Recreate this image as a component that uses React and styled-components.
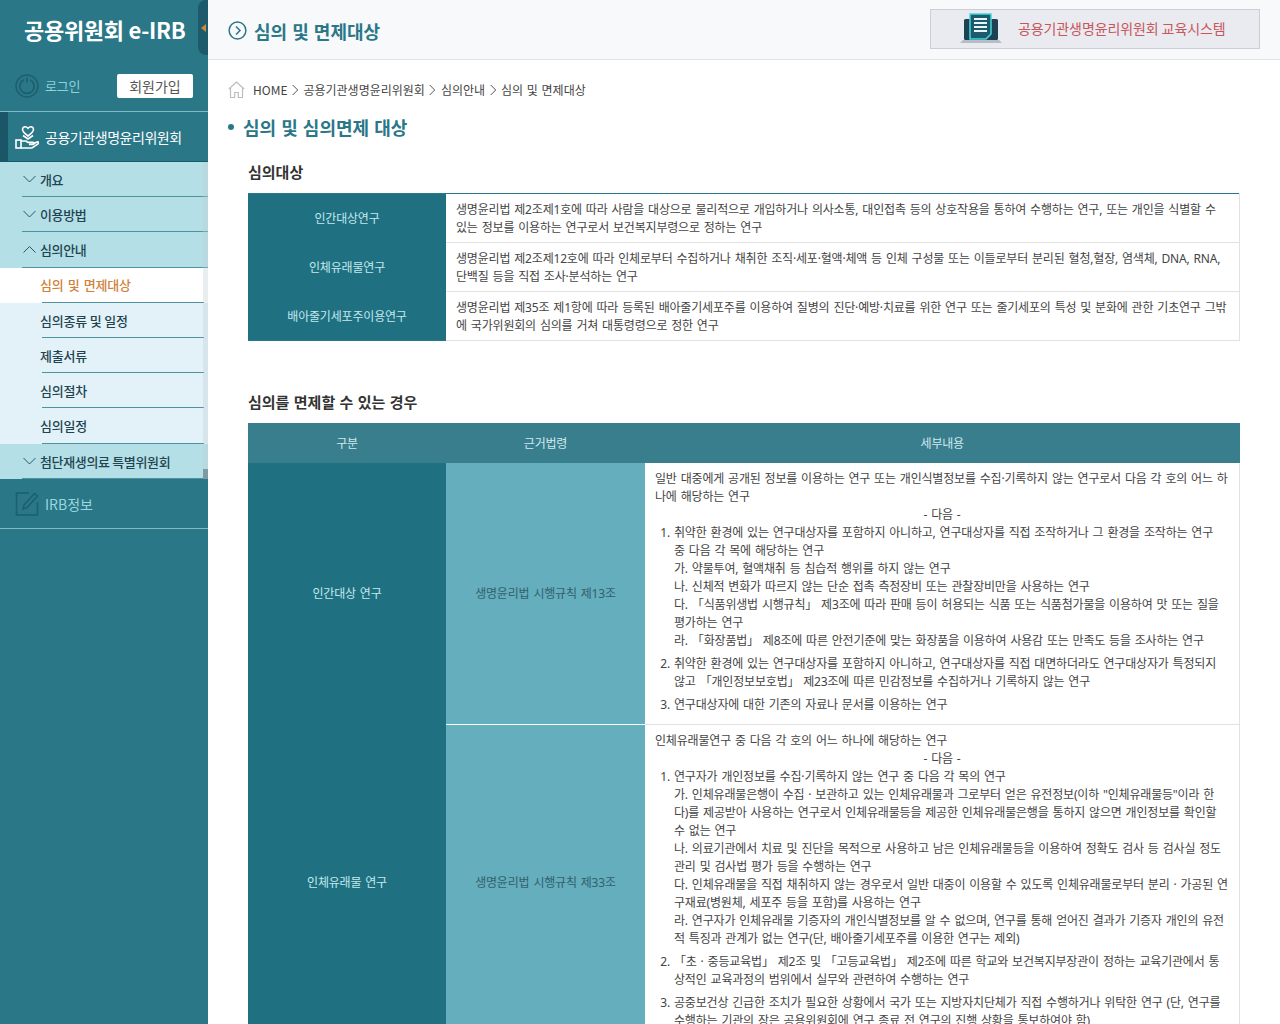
import React from 'react';
import styled, { createGlobalStyle } from 'styled-components';

const GlobalStyle = createGlobalStyle`
  html, body {
    margin: 0;
    padding: 0;
    height: 1024px;
    overflow: hidden;
    background: #ffffff;
    font-family: 'Noto Sans CJK KR', 'Noto Sans', sans-serif;
  }
  * { box-sizing: border-box; }
`;

const Page = styled.div`
  display: flex;
  width: 1280px;
  height: 1024px;
  overflow: hidden;
`;

const Sidebar = styled.aside`
  position: relative;
  flex: 0 0 208px;
  background: #2a7788;
`;

const Logo = styled.div`
  height: 60px;
  padding: 11px 0 0 24px;
  color: #ffffff;
  font-size: 22px;
  line-height: 36px;
  font-weight: 700;
  letter-spacing: -0.3px;
`;

const CollapseTab = styled.div`
  position: absolute;
  top: 0;
  right: 0;
  width: 10px;
  height: 55px;
  background: #1d5a6b;
  border-radius: 8px 0 0 8px;
  display: flex;
  align-items: center;
  justify-content: center;
  &::after {
    content: '';
    border-right: 5px solid #c98a3c;
    border-top: 4px solid transparent;
    border-bottom: 4px solid transparent;
  }
`;

const LoginRow = styled.div`
  height: 52px;
  display: flex;
  align-items: center;
  padding: 0 15px;
  border-bottom: 1px solid #7fbcc8;
`;

const LoginText = styled.span`
  margin-left: 6px;
  color: #8fd0da;
  font-size: 13px;
  letter-spacing: -0.2px;
`;

const JoinButton = styled.span`
  margin-left: auto;
  width: 76px;
  height: 24px;
  background: #ffffff;
  border-radius: 2px;
  color: #555555;
  font-size: 14px;
  line-height: 24px;
  text-align: center;
`;

const ActiveMenu = styled.div`
  height: 50px;
  display: flex;
  align-items: center;
  border-left: 8px solid #1b5668;
  padding-left: 7px;
  border-bottom: 1px solid #155c6b;
  color: #ffffff;
  font-size: 14px;
  letter-spacing: -0.45px;
`;

const MenuIconLabel = styled.span`
  margin-left: 6px;
`;

const SubMenu = styled.div`
  position: relative;
  height: 317px;
  background: #b4dfe6;
  &::after {
    content: '';
    position: absolute;
    z-index: 2;
    top: 0;
    right: 0;
    width: 5px;
    height: 100%;
    background: linear-gradient(to bottom, rgba(190, 205, 210, 0.35) 97%, #7f9aa2 97%);
  }
`;

const Depth2 = styled.div`
  position: relative;
  height: 35.2px;
  padding-left: 40px;
  display: flex;
  align-items: center;
  color: #1f4450;
  font-size: 13px;
  font-weight: 500;
  letter-spacing: -0.35px;
  &::before {
    content: '';
    position: absolute;
    left: 22px;
    right: 0;
    bottom: 0;
    height: 1px;
    background: #4d93a0;
  }
`;

const Chevron = styled.svg`
  position: absolute;
  left: 23px;
  top: 13px;
`;

const Depth3 = styled.div`
  position: relative;
  z-index: 1;
  height: 35.2px;
  padding: 0 0 ${(p) => (p.$active ? 1 : 0)}px 40px;
  display: flex;
  align-items: center;
  background: ${(p) => (p.$active ? '#ffffff' : '#e3f2f8')};
  color: ${(p) => (p.$active ? '#d0823c' : '#1f4450')};
  font-size: 13px;
  font-weight: 500;
  letter-spacing: -0.2px;
  word-spacing: ${(p) => (p.$active ? 1.5 : 0)}px;
  &::before {
    content: '';
    position: absolute;
    left: 42px;
    right: 4px;
    bottom: 0;
    height: 1px;
    background: #4d93a0;
  }
`;

const InfoMenu = styled.div`
  height: 50px;
  display: flex;
  align-items: center;
  padding-left: 15px;
  border-bottom: 1px solid #7fbcc8;
  color: #9ad6df;
  font-size: 14px;
`;

const Main = styled.main`
  flex: 1;
  min-width: 0;
`;

const TopBar = styled.header`
  height: 60px;
  background: #f8f9fb;
  border-bottom: 1px solid #e2e2e2;
  display: flex;
  align-items: center;
  padding: 2px 20px 0 20px;
`;

const TopTitle = styled.h1`
  margin: 0 0 0 7px;
  color: #2a7788;
  font-size: 18px;
  line-height: 28px;
  font-weight: 700;
  word-spacing: 1px;
`;

const EduBanner = styled.div`
  margin-left: auto;
  width: 330px;
  height: 40px;
  margin-top: -4px;
  background: #e9ebf1;
  border: 1px solid #ccced3;
  display: flex;
  align-items: center;
  padding-left: 29px;
  color: #c8565a;
  font-size: 14px;
  letter-spacing: -0.1px;
`;

const BannerText = styled.span`
  margin-left: 16px;
  padding-bottom: 2px;
`;

const Content = styled.div`
  padding: 0 40px 0 20px;
`;

const Breadcrumb = styled.nav`
  height: 54px;
  padding-top: 4px;
  display: flex;
  align-items: center;
  color: #444444;
  font-size: 12px;
  word-spacing: 1px;
`;

const Crumb = styled.span`
  margin-left: ${(p) => (p.$home ? 8 : 0)}px;
`;

const CrumbSep = styled.svg`
  margin: 2px 4.500px 0 4.500px;
`;

const PageHeading = styled.h2`
  position: relative;
  margin: 0 0 0 15px;
  height: 32px;
  color: #2a7788;
  font-size: 18px;
  line-height: 26px;
  font-weight: 700;
  word-spacing: 1px;
  &::before {
    content: '';
    position: absolute;
    left: -15px;
    top: 10px;
    width: 6px;
    height: 6px;
    border-radius: 50%;
    background: #2a7788;
  }
`;

const Section = styled.section`
  margin-left: 20px;
`;

const SectionTitle = styled.h3`
  margin: 0;
  color: #333333;
  font-size: 15px;
  line-height: 24px;
  font-weight: 700;
  word-spacing: 1px;
  padding-top: ${(p) => p.$top}px;
  padding-bottom: ${(p) => p.$bottom}px;
`;

const Table = styled.table`
  width: 992px;
  table-layout: fixed;
  border-collapse: collapse;
  color: #444444;
  font-family: 'Noto Sans', 'Noto Sans CJK KR', sans-serif;
  font-size: 12px;
  line-height: 18px;
  letter-spacing: -0.18px;
  word-spacing: 1px;
  border-top: ${(p) => (p.$lined ? '1px solid #2a7788' : 'none')};
  border-bottom: ${(p) => (p.$lined ? '1px solid #2a7788' : 'none')};
`;

const HeadCell = styled.th`
  height: 40px;
  padding: 2px 0 0;
  background: #397e8d;
  color: #cfe9ee;
  font-weight: 400;
  text-align: center;
`;

const DarkCell = styled.td`
  padding: ${(p) => (p.$nudge ? '2px 0 0' : 0)};
  background: #1f7182;
  color: #c4e8ee;
  text-align: center;
`;

const LightCell = styled.td`
  padding: 0;
  background: #64aebd;
  color: #33606c;
  text-align: center;
  border-bottom: 1px solid #ffffff;
`;

const TextCell = styled.td`
  height: 49px;
  padding: ${(p) => p.$pad || '7px 10px 5px'};
  vertical-align: top;
  border-bottom: 1px solid #e2e2e2;
  border-right: 1px solid #e2e2e2;
`;

const Centered = styled.div`
  text-align: center;
`;

const NumberList = styled.ol`
  margin: 0;
  padding: 0 0 0 19px;
`;

const NumberItem = styled.li`
  margin-bottom: 5px;
  &:last-child { margin-bottom: 0; }
`;

const PowerIcon = () => (
  <svg width="24" height="24" viewBox="0 0 24 24" fill="none" stroke="#1d5f70" strokeWidth="1.5">
    <circle cx="12" cy="12" r="11" />
    <path d="M8.800 5.800a7.200 7.200 0 1 0 6.400 0" strokeWidth="1.800" />
    <path d="M12 3.500v5" strokeWidth="1.800" />
  </svg>
);

const CareIcon = () => (
  <svg width="24" height="26" viewBox="0 0 24 26" fill="none" stroke="#ffffff" strokeWidth="1.6">
    <path d="M13 12C9 9 7.500 7.500 7.500 5.200 7.500 3 10.500 1.500 13 4.200 15.500 1.500 18.500 3 18.500 5.200 18.500 7.500 17 9 13 12Z" />
    <rect x="1" y="16" width="5" height="8" />
    <path d="M6 17h5l2 1.400h5c1.500 0 1.500 2 0 2h-4M18 20l4-2c1.400-.6 2 1 1 1.800L17 24H6" />
    <path d="M8 11.500l5 3.500 5-3.500" />
  </svg>
);

const EditIcon = () => (
  <svg width="24" height="26" viewBox="0 0 24 26" fill="none" stroke="#1d5f70" strokeWidth="1.6">
    <path d="M14 2H1.500v22h21V11" />
    <path d="M8 18l1-4L19.500 2.500l3 2.500L12 16.500 8 18Z" />
  </svg>
);

const LaptopDocIcon = () => (
  <svg width="42" height="32" viewBox="0 0 42 32">
    <path d="M3 27h36l3 3H0Z" fill="#b8bcc4" />
    <rect x="4" y="6" width="34" height="21" rx="1.500" fill="#1d4254" />
    <path d="M10 1h21v20l-5 5H10Z" fill="#1d5a6b" stroke="#46d6dc" strokeWidth="1.500" />
    <path d="M14 6h13M14 10h13M14 14h13M14 18h13" stroke="#e5f7f9" strokeWidth="1.800" />
  </svg>
);

const HomeIcon = () => (
  <svg width="17" height="17" viewBox="0 0 17 17" fill="none" stroke="#bdbdbd" strokeWidth="1.200">
    <path d="M.8 8 8.500 1l7.700 7M2.500 7v9.500h4.200v-5h3.600v5h4.200V7" />
  </svg>
);

const CircleArrow = () => (
  <svg width="19" height="19" viewBox="0 0 19 19" fill="none" stroke="#2a7788" strokeWidth="1.500">
    <circle cx="9.500" cy="9.500" r="8.400" />
    <path d="M8 5.500l4 4-4 4" />
  </svg>
);

const Arrow = ({ up }) => (
  <Chevron width="13" height="8" viewBox="0 0 13 8" fill="none" stroke="#1f5a68" strokeWidth="1">
    <path d={up ? 'M.5 7.500l6-6 6 6' : 'M.5 1l6 6 6-6'} />
  </Chevron>
);

const Sep = () => (
  <CrumbSep width="7" height="12" viewBox="0 0 7 12" fill="none" stroke="#555555" strokeWidth="1">
    <path d="M.7 1l5 5-5 5" />
  </CrumbSep>
);

const App = () => (
  <Page>
    <GlobalStyle />
    <Sidebar>
      <CollapseTab />
      <Logo>공용위원회 e-IRB</Logo>
      <LoginRow>
        <PowerIcon />
        <LoginText>로그인</LoginText>
        <JoinButton>회원가입</JoinButton>
      </LoginRow>
      <ActiveMenu>
        <CareIcon />
        <MenuIconLabel>공용기관생명윤리위원회</MenuIconLabel>
      </ActiveMenu>
      <SubMenu>
        <Depth2><Arrow />개요</Depth2>
        <Depth2><Arrow />이용방법</Depth2>
        <Depth2><Arrow up />심의안내</Depth2>
        <Depth3 $active>심의 및 면제대상</Depth3>
        <Depth3>심의종류 및 일정</Depth3>
        <Depth3>제출서류</Depth3>
        <Depth3>심의절차</Depth3>
        <Depth3>심의일정</Depth3>
        <Depth2><Arrow />첨단재생의료 특별위원회</Depth2>
      </SubMenu>
      <InfoMenu>
        <EditIcon />
        <MenuIconLabel>IRB정보</MenuIconLabel>
      </InfoMenu>
    </Sidebar>
    <Main>
      <TopBar>
        <CircleArrow />
        <TopTitle>심의 및 면제대상</TopTitle>
        <EduBanner>
          <LaptopDocIcon />
          <BannerText>공용기관생명윤리위원회 교육시스템</BannerText>
        </EduBanner>
      </TopBar>
      <Content>
        <Breadcrumb>
          <HomeIcon />
          <Crumb $home>HOME</Crumb>
          <Sep />
          <Crumb>공용기관생명윤리위원회</Crumb>
          <Sep />
          <Crumb>심의안내</Crumb>
          <Sep />
          <Crumb>심의 및 면제대상</Crumb>
        </Breadcrumb>
        <PageHeading>심의 및 심의면제 대상</PageHeading>
        <Section>
          <SectionTitle $top={14} $bottom={9}>심의대상</SectionTitle>
          <Table $lined>
            <colgroup>
              <col width="198" />
              <col />
            </colgroup>
            <tbody>
              <tr>
                <DarkCell $nudge>인간대상연구</DarkCell>
                <TextCell>생명윤리법 제2조제1호에 따라 사람을 대상으로 물리적으로 개입하거나 의사소통, 대인접촉 등의 상호작용을 통하여 수행하는 연구, 또는 개인을 식별할 수 있는 정보를 이용하는 연구로서 보건복지부령으로 정하는 연구</TextCell>
              </tr>
              <tr>
                <DarkCell $nudge>인체유래물연구</DarkCell>
                <TextCell>생명윤리법 제2조제12호에 따라 인체로부터 수집하거나 채취한 조직·세포·혈액·체액 등 인체 구성물 또는 이들로부터 분리된 혈청,혈장, 염색체, DNA, RNA, 단백질 등을 직접 조사·분석하는 연구</TextCell>
              </tr>
              <tr>
                <DarkCell $nudge>배아줄기세포주이용연구</DarkCell>
                <TextCell>생명윤리법 제35조 제1항에 따라 등록된 배아줄기세포주를 이용하여 질병의 진단·예방·치료를 위한 연구 또는 줄기세포의 특성 및 분화에 관한 기초연구 그밖에 국가위원회의 심의를 거쳐 대통령령으로 정한 연구</TextCell>
              </tr>
            </tbody>
          </Table>
          <SectionTitle $top={49} $bottom={9}>심의를 면제할 수 있는 경우</SectionTitle>
          <Table>
            <colgroup>
              <col width="198" />
              <col width="199" />
              <col />
            </colgroup>
            <thead>
              <tr>
                <HeadCell>구분</HeadCell>
                <HeadCell>근거법령</HeadCell>
                <HeadCell>세부내용</HeadCell>
              </tr>
            </thead>
            <tbody>
              <tr>
                <DarkCell>인간대상 연구</DarkCell>
                <LightCell>생명윤리법 시행규칙 제13조</LightCell>
                <TextCell $pad="7px 10px 10px 10px">
                  일반 대중에게 공개된 정보를 이용하는 연구 또는 개인식별정보를 수집·기록하지 않는 연구로서 다음 각 호의 어느 하나에 해당하는 연구
                  <Centered>- 다음 -</Centered>
                  <NumberList>
                    <NumberItem>
                      취약한 환경에 있는 연구대상자를 포함하지 아니하고, 연구대상자를 직접 조작하거나 그 환경을 조작하는 연구<br />
                      중 다음 각 목에 해당하는 연구<br />
                      가. 약물투여, 혈액채취 등 침습적 행위를 하지 않는 연구<br />
                      나. 신체적 변화가 따르지 않는 단순 접촉 측정장비 또는 관찰장비만을 사용하는 연구<br />
                      다. 「식품위생법 시행규칙」 제3조에 따라 판매 등이 허용되는 식품 또는 식품첨가물을 이용하여 맛 또는 질을 평가하는 연구<br />
                      라. 「화장품법」 제8조에 따른 안전기준에 맞는 화장품을 이용하여 사용감 또는 만족도 등을 조사하는 연구
                    </NumberItem>
                    <NumberItem>취약한 환경에 있는 연구대상자를 포함하지 아니하고, 연구대상자를 직접 대면하더라도 연구대상자가 특정되지 않고 「개인정보보호법」 제23조에 따른 민감정보를 수집하거나 기록하지 않는 연구</NumberItem>
                    <NumberItem>연구대상자에 대한 기존의 자료나 문서를 이용하는 연구</NumberItem>
                  </NumberList>
                </TextCell>
              </tr>
              <tr>
                <DarkCell>인체유래물 연구</DarkCell>
                <LightCell>생명윤리법 시행규칙 제33조</LightCell>
                <TextCell $pad="7px 10px 10px 10px">
                  인체유래물연구 중 다음 각 호의 어느 하나에 해당하는 연구
                  <Centered>- 다음 -</Centered>
                  <NumberList>
                    <NumberItem>
                      연구자가 개인정보를 수집·기록하지 않는 연구 중 다음 각 목의 연구<br />
                      가. 인체유래물은행이 수집 · 보관하고 있는 인체유래물과 그로부터 얻은 유전정보(이하 "인체유래물등"이라 한<br />
                      다)를 제공받아 사용하는 연구로서 인체유래물등을 제공한 인체유래물은행을 통하지 않으면 개인정보를 확인할<br />
                      수 없는 연구<br />
                      나. 의료기관에서 치료 및 진단을 목적으로 사용하고 남은 인체유래물등을 이용하여 정확도 검사 등 검사실 정도관리 및 검사법 평가 등을 수행하는 연구<br />
                      다. 인체유래물을 직접 채취하지 않는 경우로서 일반 대중이 이용할 수 있도록 인체유래물로부터 분리 · 가공된 연구재료(병원체, 세포주 등을 포함)를 사용하는 연구<br />
                      라. 연구자가 인체유래물 기증자의 개인식별정보를 알 수 없으며, 연구를 통해 얻어진 결과가 기증자 개인의 유전적 특징과 관계가 없는 연구(단, 배아줄기세포주를 이용한 연구는 제외)
                    </NumberItem>
                    <NumberItem>「초 · 중등교육법」 제2조 및 「고등교육법」 제2조에 따른 학교와 보건복지부장관이 정하는 교육기관에서 통상적인 교육과정의 범위에서 실무와 관련하여 수행하는 연구</NumberItem>
                    <NumberItem>공중보건상 긴급한 조치가 필요한 상황에서 국가 또는 지방자치단체가 직접 수행하거나 위탁한 연구 (단, 연구를 수행하는 기관의 장은 공용위원회에 연구 종료 전 연구의 진행 상황을 통보하여야 함)</NumberItem>
                  </NumberList>
                </TextCell>
              </tr>
            </tbody>
          </Table>
        </Section>
      </Content>
    </Main>
  </Page>
);

export default App;
